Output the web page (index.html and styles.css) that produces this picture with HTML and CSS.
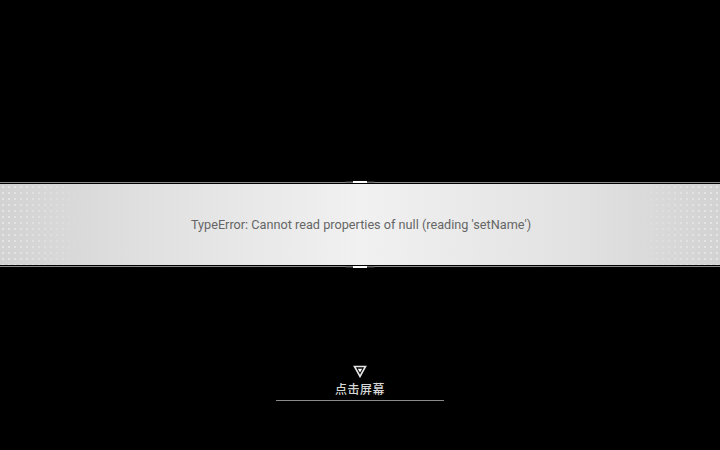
FILE: index.html
```html
<!DOCTYPE html>
<html lang="zh">
<head>
<meta charset="utf-8">
<link rel="stylesheet" href="styles.css">
</head>
<body>
<div class="screen">
  <div class="banner">
    <div class="rule rule-top"><span class="mark"></span></div>
    <div class="band">
      <div class="dots dots-left"></div>
      <p class="msg">TypeError: Cannot read properties of null (reading 'setName')</p>
      <div class="dots dots-right"></div>
    </div>
    <div class="rule rule-bottom"><span class="mark"></span></div>
  </div>
  <div class="tap">
    <svg class="tri" width="14" height="13" viewBox="0 0 14 13">
      <polygon points="1.5,1.5 12.5,1.5 7,11.5" fill="none" stroke="#e6e6e6" stroke-width="1.6" stroke-linejoin="miter"/>
      <polygon points="4.8,3.8 9.2,3.8 7,7.6" fill="#ffffff"/>
    </svg>
    <div class="tap-label">点击屏幕</div>
    <div class="tap-line"></div>
  </div>
</div>
</body>
</html>
```

FILE: styles.css
```css
html, body {
  margin: 0;
  padding: 0;
  background: #000;
}
.screen {
  width: 720px;
  height: 450px;
  background: #000;
  display: flex;
  flex-direction: column;
  align-items: center;
  font-family: Roboto, "Noto Sans", "Noto Sans CJK SC", sans-serif;
}
.banner {
  margin-top: 182px;
  width: 720px;
  display: flex;
  flex-direction: column;
}
.rule {
  height: 1px;
  background: #8a8a8a;
  position: relative;
}
.rule-top { margin-bottom: 1px; }
.rule-bottom { margin-top: 1px; }
.mark {
  position: absolute;
  left: 353px;
  width: 14px;
  height: 2px;
  background: #fff;
  box-shadow: -8px 0 0 -0.5px #555, 8px 0 0 -0.5px #555;
}
.rule-top .mark { top: -1px; }
.rule-bottom .mark { top: 0px; }
.band {
  height: 81px;
  background: linear-gradient(to right, #d2d2d2 0%, #e0e0e0 20%, #f1f1f1 50%, #e2e2e2 80%, #d2d2d2 100%);
  display: flex;
  align-items: center;
  justify-content: center;
  position: relative;
}
.dots {
  position: absolute;
  top: 0;
  bottom: 0;
  width: 90px;
  background-image: radial-gradient(circle, rgba(255,255,255,0.45) 0.7px, transparent 1px);
  background-size: 6px 6px;
}
.dots-left {
  left: 0;
  -webkit-mask-image: linear-gradient(to right, #000, transparent);
  mask-image: linear-gradient(to right, #000, transparent);
}
.dots-right {
  right: 0;
  -webkit-mask-image: linear-gradient(to left, #000, transparent);
  mask-image: linear-gradient(to left, #000, transparent);
}
.msg {
  margin: 0;
  font-size: 12.7px;
  color: #666;
  letter-spacing: 0;
  transform: translateX(1px);
}
.tap {
  margin-top: 98px;
  display: flex;
  flex-direction: column;
  align-items: center;
}
.tri { display: block; }
.tap-label {
  margin-top: 3px;
  font-family: "Noto Sans CJK SC", sans-serif;
  font-size: 12px;
  font-weight: 500;
  line-height: 16px;
  color: #d6d6d6;
  letter-spacing: 0.5px;
}
.tap-line {
  margin-top: 3px;
  width: 168px;
  height: 1px;
  background: #8a8a8a;
}
```
